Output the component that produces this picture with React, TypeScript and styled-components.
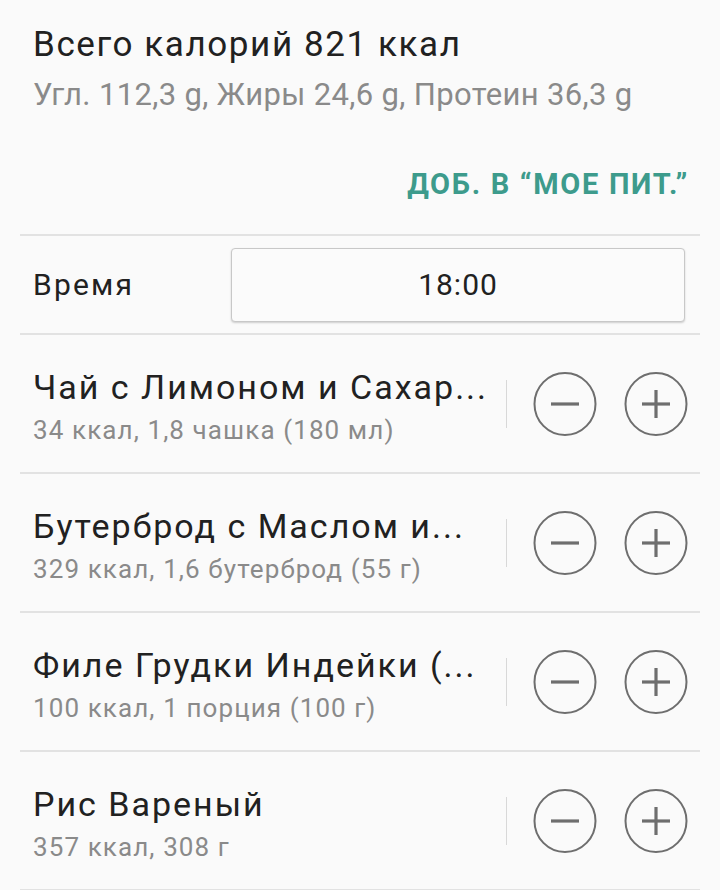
import React from "react";
import styled, { createGlobalStyle } from "styled-components";

const Global = createGlobalStyle`
  html, body { margin: 0; padding: 0; background: #fafafa; }
  body { font-family: Roboto, "Noto Sans", sans-serif; -webkit-font-smoothing: antialiased; }
`;

const Page = styled.div`
  width: 720px;
  height: 890px;
  background: #fafafa;
  padding: 0 20px;
  box-sizing: border-box;
  overflow: hidden;
`;

const Header = styled.div`
  padding: 23px 13px 0;
  display: flex;
  flex-direction: column;
`;

const Title = styled.div`
  font-size: 35px;
  line-height: 44px;
  letter-spacing: 1.6px;
  color: #212121;
  white-space: nowrap;
`;

const Sub = styled.div<{ $size?: number; $lh?: number; $mt?: number; $ls?: number }>`
  font-size: ${(p) => p.$size ?? 31}px;
  line-height: ${(p) => p.$lh ?? 40}px;
  margin-top: ${(p) => p.$mt ?? 0}px;
  letter-spacing: ${(p) => p.$ls ?? 0.35}px;
  color: #8a8a8a;
  white-space: nowrap;
`;

const ActionRow = styled.div`
  display: flex;
  justify-content: flex-end;
  padding: 49px 0 30px;
`;

const ActionButton = styled.button`
  border: 0;
  background: none;
  padding: 0;
  margin-right: -2px;
  font-family: Roboto, sans-serif;
  font-weight: 700;
  font-size: 29px;
  line-height: 40px;
  letter-spacing: 1.7px;
  color: #3d9b8c;
`;

const Divider = styled.div`
  height: 2px;
  background: #e2e2e2;
`;

const TimeRow = styled.div`
  display: flex;
  align-items: center;
  height: 97px;
  padding: 0 15px 0 13px;
`;

const Label = styled.div`
  width: 198px;
  font-size: 30px;
  letter-spacing: 2.2px;
  color: #212121;
`;

const TimeBox = styled.div`
  flex: 1;
  height: 72px;
  border: 1px solid #c8c8c8;
  border-radius: 4px;
  background: #fbfbfb;
  box-shadow: 0 1px 2px rgba(0, 0, 0, 0.18);
  display: flex;
  align-items: center;
  justify-content: center;
  font-size: 30px;
  letter-spacing: 1px;
  color: #212121;
`;

const FoodRow = styled.div`
  display: flex;
  align-items: center;
  height: 137px;
  padding: 0 12px 0 13px;
`;

const FoodText = styled.div`
  flex: 1;
  display: flex;
  flex-direction: column;
  margin-top: 4px;
`;

const FoodName = styled.div`
  font-size: 34px;
  line-height: 44px;
  letter-spacing: 2px;
  color: #212121;
  white-space: nowrap;
`;

const VSep = styled.div`
  width: 1px;
  height: 48px;
  background: #d8d8d8;
  margin-right: 26px;
`;

const Controls = styled.div`
  display: flex;
  gap: 27px;
`;

const RoundButton = styled.button`
  width: 64px;
  height: 64px;
  padding: 0;
  border: 0;
  background: none;
  display: flex;
  align-items: center;
  justify-content: center;
`;

const MinusIcon = () => (
  <svg width="64" height="64" viewBox="0 0 64 64">
    <ellipse cx="32" cy="32" rx="30.5" ry="31" fill="none" stroke="#6e6e6e" strokeWidth="2" />
    <line x1="18" y1="32" x2="46" y2="32" stroke="#6e6e6e" strokeWidth="3.2" />
  </svg>
);

const PlusIcon = () => (
  <svg width="64" height="64" viewBox="0 0 64 64">
    <ellipse cx="32" cy="32" rx="30.5" ry="31" fill="none" stroke="#6e6e6e" strokeWidth="2" />
    <line x1="18" y1="32" x2="46" y2="32" stroke="#6e6e6e" strokeWidth="3.2" />
    <line x1="32" y1="18" x2="32" y2="46" stroke="#6e6e6e" strokeWidth="3.2" />
  </svg>
);

const foods = [
  { name: "Чай с Лимоном и Сахар...", info: "34 ккал, 1,8 чашка (180 мл)" },
  { name: "Бутерброд с Маслом и...", info: "329 ккал, 1,6 бутерброд (55 г)" },
  { name: "Филе Грудки Индейки (...", info: "100 ккал, 1 порция (100 г)" },
  { name: "Рис Вареный", info: "357 ккал, 308 г" },
];

export default function App() {
  return (
    <Page>
      <Global />
      <Header>
        <Title>Всего калорий 821 ккал</Title>
        <Sub $mt={8}>Угл. 112,3 g, Жиры 24,6 g, Протеин 36,3 g</Sub>
        <ActionRow>
          <ActionButton>ДОБ. В “МОЕ ПИТ.”</ActionButton>
        </ActionRow>
      </Header>
      <Divider />
      <TimeRow>
        <Label>Время</Label>
        <TimeBox>18:00</TimeBox>
      </TimeRow>
      {foods.map((f) => (
        <React.Fragment key={f.name}>
          <Divider />
          <FoodRow>
            <FoodText>
              <FoodName>{f.name}</FoodName>
              <Sub $size={26} $lh={34} $mt={4} $ls={1.1}>{f.info}</Sub>
            </FoodText>
            <VSep />
            <Controls>
              <RoundButton aria-label="minus"><MinusIcon /></RoundButton>
              <RoundButton aria-label="plus"><PlusIcon /></RoundButton>
            </Controls>
          </FoodRow>
        </React.Fragment>
      ))}
      <Divider />
    </Page>
  );
}
